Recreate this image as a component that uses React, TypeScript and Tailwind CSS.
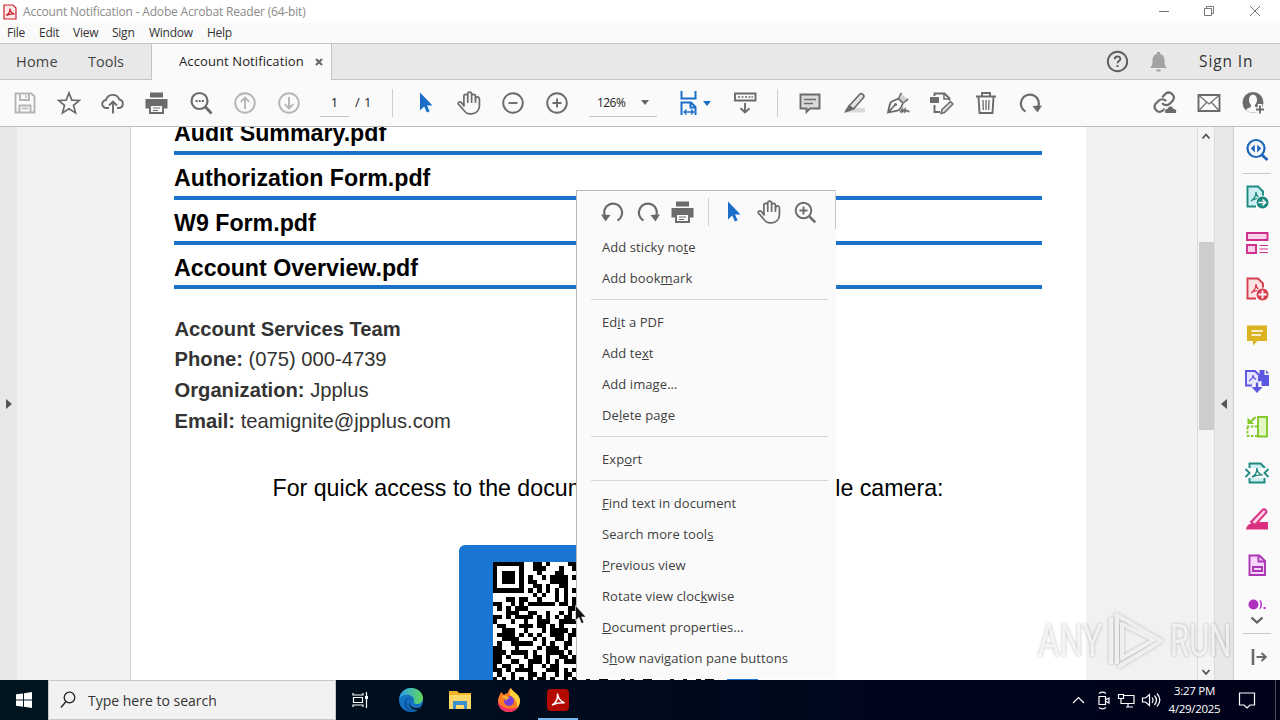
import type { ReactNode } from 'react'

type IcoProps = { children: ReactNode; className?: string }

const Ico = ({ children, className = 'text-[#6b6b6b]' }: IcoProps) => (
  <svg
    viewBox="0 0 24 24"
    className={`h-6 w-6 shrink-0 ${className}`}
    fill="none"
    stroke="currentColor"
    strokeWidth="1.9"
  >
    {children}
  </svg>
)

const Cell = ({ children }: { children: ReactNode }) => (
  <div className="flex w-11 shrink-0 items-center justify-center">{children}</div>
)

const SaveIcon = () => (
  <Ico className="text-[#b5b5b5]">
    <path d="M2.5 2.5h16l3 3v16h-19z" />
    <path d="M7 3v6h9V3M6.500 21v-6.500h11V21" />
    <path d="M13 4v3M9 17.500h6" strokeWidth="1.300" />
  </Ico>
)

const StarIcon = () => (
  <Ico>
    <path d="M12 1.900l2.800 7.200 7.700.4-6 4.900 2 7.500-6.500-4.200-6.500 4.200 2-7.500-6-4.900 7.700-.4z" strokeWidth="1.700" />
  </Ico>
)

const CloudIcon = () => (
  <Ico>
    <path d="M8 17H5.500a4 4 0 0 1-.5-8 7 7 0 0 1 13.300-.5A4.300 4.300 0 0 1 18 17h-2" />
    <path d="M12 22.500V11M8 14.500l4-4 4 4" />
  </Ico>
)

const PrintIcon = () => (
  <Ico>
    <path d="M5 1.500h13v5H5z" fill="currentColor" stroke="none" />
    <path d="M.5 8h22v9.500H19V13H4v4.500H.5z" fill="currentColor" stroke="none" />
    <path d="M5 14h13v8H5z" />
    <path d="M8 17h7M8 19.500h5" strokeWidth="1.200" />
  </Ico>
)

const FindIcon = () => (
  <Ico>
    <circle cx="10.500" cy="10" r="8" strokeWidth="2.200" />
    <path d="M16.500 16l6 6.500" strokeWidth="2.800" />
    <path d="M6.500 10h2M9.700 10h2M12.900 10h2" strokeWidth="2" />
  </Ico>
)

const UpIcon = () => (
  <Ico className="text-[#b5b5b5]">
    <circle cx="12" cy="12" r="9.800" />
    <path d="M12 18V7M7.800 10.800L12 6.600l4.200 4.200" />
  </Ico>
)

const DownIcon = () => (
  <Ico className="text-[#b5b5b5]">
    <circle cx="12" cy="12" r="9.800" />
    <path d="M12 6v11M7.800 13.200l4.200 4.200 4.200-4.200" />
  </Ico>
)

const ArrowIcon = () => (
  <Ico className="text-[#1b6ec8]">
    <path d="M7 1.500v18l4.200-4 2.700 6 2.800-1.300-2.700-5.700h5.500z" fill="currentColor" stroke="none" />
  </Ico>
)

const HandIcon = () => (
  <Ico>
    <g strokeWidth="1.600" strokeLinecap="round" transform="translate(-.8 -.6) scale(1.070)">
      <path d="M18 11V5.500a1.800 1.800 0 0 0-3.600 0M14.400 11V3.500a1.800 1.800 0 0 0-3.600 0V11M10.800 11V5.500a1.800 1.800 0 0 0-3.600 0v8.800" />
      <path d="M18 8a1.800 1.800 0 0 1 3.700 0v6.500c0 4-3 7.500-7.500 7.500h-1c-3.500 0-5-1.500-6.500-4l-4.500-5c-1-1.600 1-3 2.500-1.800l2.500 3.100" />
    </g>
  </Ico>
)

const MinusIcon = () => (
  <Ico>
    <circle cx="12" cy="12" r="9.800" />
    <path d="M7.500 12h9" />
  </Ico>
)

const PlusIcon = () => (
  <Ico>
    <circle cx="12" cy="12" r="9.800" />
    <path d="M7.500 12h9M12 7.500v9" />
  </Ico>
)

const FitIcon = () => (
  <Ico className="text-[#1b6ec8]">
    <path d="M4.500 0v7.500h14V0" strokeWidth="2" />
    <path d="M4.500 24V11.500h9.500l4.500 4.500v8M13.500 11.500v5h5" strokeWidth="2" />
    <path d="M7 21h9.500M9.500 18.500L7 21l2.500 2.500M14 18.500l2.500 2.500-2.500 2.500" strokeWidth="1.300" />
  </Ico>
)

const KeyboardIcon = () => (
  <Ico>
    <path d="M2 2.500h20.500v7H2z" />
    <path d="M5 6h2M8.500 6h2M12 6h2M15.500 6h2M18.500 6h1.500" strokeWidth="1.600" />
    <path d="M12 12v9M7.500 17.200l4.500 4.300 4.500-4.300" />
  </Ico>
)

const CommentIcon = () => (
  <Ico>
    <path d="M2.500 3.500h19v14H12L8.500 21v-3.500h-6z" fill="#d9d9d9" />
    <path d="M6 8.500h12M6 12.500h9" strokeWidth="1.300" />
  </Ico>
)

const HighlightIcon = () => (
  <Ico>
    <path d="M9 17h14v4.500H4z" fill="#d9d9d9" stroke="none" />
    <path d="M7 15L17.500 3.500c2-2 5.500.5 4 3L11.500 18z" fill="#e2e2e2" strokeWidth="1.700" />
    <path d="M7 14l5 4-4 2-6 2 2-4z" fill="currentColor" stroke="none" />
  </Ico>
)

const PenIcon = () => (
  <Ico>
    <path d="M2 21.500c1-4 1-7 3-10.500l7.500-3.500 4.500 4.500c-1 3-2 5-4 7-3 1.500-7 1.500-11 2.500zM2 21.500l6.500-7" strokeWidth="1.800" />
    <path d="M13 7l2.500-5M17.500 11.500L22 8" strokeWidth="1.900" />
    <path d="M15.500 3l5.500 5-3.500 3-4-4z" fill="#d0d0d0" stroke="none" />
    <circle cx="9.500" cy="13.500" r="1.600" fill="currentColor" stroke="none" />
    <path d="M14 21.500l2.500-3.500v3l2.500-3v3l2-1.500 2.500 1.500" strokeWidth="1.500" />
  </Ico>
)

const EditPageIcon = () => (
  <Ico>
    <path d="M0 6h9v6H0z" fill="currentColor" stroke="none" />
    <path d="M4.500 5V2.500h10l5 5v2M4.500 14v7H10" />
    <path d="M14 3v5h5" strokeWidth="1.500" />
    <path d="M12 18.500l8.500-8 2.500 2.500-8.500 8.500-3.500 1z" fill="#d9d9d9" strokeWidth="1.500" />
  </Ico>
)

const TrashIcon = () => (
  <Ico>
    <path d="M2 5.500h20M8 5V2h8v3M4.500 6l1 16h13l1-16" />
    <path d="M9 9l.3 10M12 9v10M15 9l-.3 10" strokeWidth="1.300" />
  </Ico>
)

const RotateRight = () => (
  <Ico>
    <path d="M7.500 20.500A9 9 0 1 1 20 16.500" strokeWidth="2.200" />
    <path d="M14.500 15l9.500-.5-4.500 7z" fill="currentColor" stroke="none" />
  </Ico>
)

const RotateLeft = () => (
  <Ico>
    <path d="M16.500 20.500A9 9 0 1 0 4 16.500" strokeWidth="2.200" />
    <path d="M9.500 15L0 14.500l4.500 7z" fill="currentColor" stroke="none" />
  </Ico>
)

const LinkIcon = () => (
  <Ico>
    <g strokeWidth="2.200" transform="translate(-.8 -.8)">
      <path d="M10 13a5 5 0 0 0 7.500.5l3-3a5 5 0 0 0-7-7l-3.500 3.500" />
      <path d="M14 11a5 5 0 0 0-7.500-.5l-3 3a5 5 0 0 0 7 7l2-2" />
    </g>
    <path d="M12.500 22.500c-2-2.500-.5-5 2-5 1-3.500 5-3.500 6 0 3 0 4 3 2.500 5z" fill="currentColor" stroke="#fafafa" strokeWidth="1" />
  </Ico>
)

const MailIcon = () => (
  <Ico>
    <path d="M1.500 4h21v16h-21z" />
    <path d="M2 4.500l10 8.500 10-8.500M2 19.500l7.500-8M22 19.500l-7.500-8" strokeWidth="1.100" />
  </Ico>
)

const PersonIcon = () => (
  <Ico>
    <circle cx="12" cy="11.500" r="10.500" fill="currentColor" stroke="none" />
    <ellipse cx="12" cy="9" rx="4" ry="5.500" fill="#fafafa" stroke="none" />
    <path d="M10 13h4v2.500c1 1.500 4 1.500 5 3.500-3.500 3.500-10.500 3.500-14 0 1-2 4-2 5-3.500z" fill="#fafafa" stroke="none" />
    <path d="M19 13v11M13.500 18.500h11" stroke="#fafafa" strokeWidth="4.500" />
    <path d="M19 14.500v8M15 18.500h8" />
  </Ico>
)

const ZoomPlus = () => (
  <Ico>
    <circle cx="10.500" cy="10.500" r="7.800" />
    <path d="M6.500 10.500h8M10.500 6.500v8" />
    <path d="M16.300 16.300l6 6" strokeWidth="2.600" />
  </Ico>
)

const Acrobat = () => (
  <path d="M6 16c3-2 5-6 5-9M11 7c0 4 3 6 6 6.500M6 15.500c3-1.500 7-2.500 10.500-2" strokeWidth="1.300" />
)

const sideTools = [
  <Ico className="text-[#1c8a80]">
    <path d="M11 21.500H2.500v-20H13l5 5V12" fill="#cdeef0" />
    <Acrobat />
    <circle cx="17.500" cy="17.500" r="6.500" fill="currentColor" stroke="#fafafa" strokeWidth="1" />
    <path d="M13.500 17.500h7M17.500 14.500l3 3-3 3" stroke="#fff" strokeWidth="1.600" />
  </Ico>,
  <Ico className="text-[#cf2f8c]">
    <path d="M2 2h20.500v7H2zM2 14h9v8H2z" fill="#fbd0ea" />
    <path d="M14.500 14.500H23M14.500 18H23M14.500 21.500H23" strokeWidth="1.200" />
  </Ico>,
  <Ico className="text-[#d63f50]">
    <path d="M11 21.500H2.500v-20H13l5 5V12" fill="#fde3e3" />
    <Acrobat />
    <circle cx="17.500" cy="17.500" r="6.500" fill="currentColor" stroke="#fafafa" strokeWidth="1" />
    <path d="M13.500 17.500h8M17.500 13.500v8" stroke="#fff" strokeWidth="1.800" />
  </Ico>,
  <Ico className="text-[#dbb320]">
    <path d="M2 2.500h20V18H12.500L8 22.500V18H2z" fill="currentColor" stroke="none" />
    <path d="M6.500 8H18M6.500 12H16" stroke="#fff" strokeWidth="1.600" />
  </Ico>,
  <Ico className="text-[#5c57e0]">
    <path d="M7 16.500H1V2h9l4 4v7" fill="#e6e4ff" />
    <path d="M14.500 1h5v5h4.500v11h-7.500v-5h-2z" fill="currentColor" stroke="none" />
    <path d="M21 1l3 3.500h-3z" fill="currentColor" stroke="none" />
    <path d="M4 12c3-2 4-4 4-6 0 3 2 4 3 4.500" strokeWidth="1.200" />
    <path d="M12 12.500v9" stroke="#fafafa" strokeWidth="5.500" />
    <path d="M12 13.500v8" strokeWidth="2.500" />
    <path d="M6.500 18h11L12 24z" fill="currentColor" stroke="none" />
  </Ico>,
  <Ico className="text-[#84c92b]">
    <path d="M13 2h9v19.500h-9z" fill="#e3f7c4" />
    <path d="M2 11.500h10M2 21h10M2.500 12v9" strokeDasharray="2.500 1.500" />
    <path d="M2.500 2.500V9H9z" fill="currentColor" stroke="none" />
    <path d="M10.500 2L5 7.500" strokeWidth="2.200" />
  </Ico>,
  <Ico className="text-[#1c8a80]">
    <path d="M4.500 7V2.500h11l4 4V7M4.500 17v4.500h15V17" fill="#cdeef0" />
    <path d="M.5 8l4 4-4 4M23.500 8l-4 4 4 4" />
    <path d="M7 16c4-2 5-5 5-9 0 4 2 6 5.500 7-4-.5-7 .5-10.500 2z" strokeWidth="1.400" />
  </Ico>,
  <Ico className="text-[#d9307f]">
    <path d="M1 22.500c1-5 4-6 6-6l2.500 1.500c2-1 3-1.500 4-3h9.500v7.500z" fill="currentColor" stroke="none" />
    <path d="M6 15L17.500 3c2-2 5 1 3.500 3L10 18z" fill="#ffd3e8" />
  </Ico>,
  <Ico className="text-[#aa35b5]">
    <path d="M4.500 2.500h10l5.500 5.500v14h-15.500z" fill="#f6d5fa" />
    <path d="M13.500 3v5.500H19M8 14h9v4H8z" />
  </Ico>,
]

const menuGroups = [
  ['Add sticky no&te', 'Add book&mark'],
  ['Ed&it a PDF', 'Add te&xt', 'Add ima&ge...', 'De&lete page'],
  ['Exp&ort'],
  [
    '&Find text in document',
    'Search more tool&s',
    '&Previous view',
    'Rotate view cloc&kwise',
    '&Document properties...',
    'S&how navigation pane buttons',
  ],
]

const MenuLabel = ({ text }: { text: string }) => {
  const i = text.indexOf('&')
  return (
    <span>
      {text.slice(0, i)}
      <span className="underline decoration-1 underline-offset-1">{text[i + 1]}</span>
      {text.slice(i + 2)}
    </span>
  )
}

const ContextMenu = () => (
  <div className="absolute left-[576px] top-[190px] z-10 h-[489px] w-[260px] overflow-hidden border-l border-t border-[#b9b9b9] bg-[#fafafa] font-['Open_Sans',sans-serif] text-[13px] tracking-[0.08px] text-[#3f3f3f]">
    <div className="flex h-[40px] items-center">
      <div className="flex h-9 w-full items-center border-r border-[#c8c8c8] pl-6 pt-[2px]">
        <div className="flex gap-[11px]">
          <RotateLeft />
          <RotateRight />
          <PrintIcon />
        </div>
        <div className="ml-[13px] mr-3 h-7 w-px bg-[#d0d0d0]" />
        <div className="flex gap-3">
          <ArrowIcon />
          <HandIcon />
          <ZoomPlus />
        </div>
      </div>
    </div>
    {menuGroups.map((group, g) => (
      <div key={g}>
        {g > 0 && (
          <div className="flex h-[13px] items-center pl-[14px] pr-2">
            <div className="h-px w-full bg-[#d5d5d5]" />
          </div>
        )}
        {group.map((item) => (
          <div key={item} className="flex h-[31px] items-center whitespace-pre pl-[25px] pt-[2px]">
            <MenuLabel text={item} />
          </div>
        ))}
      </div>
    ))}
  </div>
)

const qr = [
  '#######..##.#....##',
  '#.....#..###...#..#',
  '#.###.#...#...##...',
  '#.###.#.#..#.####.#',
  '#.###.#.##...####..',
  '#.....#..##.#..##..',
  '#######.#.#.#.#.#.#',
  '.........#.#..#.#..',
  '...##.##..#...#.#.#',
  '##..#.#.######.##.#',
  '.#.#.###.........##',
  '...###..##..#..#.#.',
  '##.#.####.#.#.#.##.',
  '#...#..#..###..####',
  '.##...###.##.#.#...',
  '..###..#...#.####.#',
  '.####.#.#.#..###.##',
  '..####...#.#..##.#.',
  '.#..#####..#.#..##.',
  '##...#....#.###.#..',
  '###.####.#..####.#.',
  '##.#...#.##.#..##.#',
  '##..##..###.#.#.###',
  '#.##..#.#..#.##....',
  '##.#.####...###.#.#',
  '.#..#...##.#..#.##.',
  '#.#.#.#.#.##.#..#.#',
]

const files = ['Audit Summary.pdf', 'Authorization Form.pdf', 'W9 Form.pdf', 'Account Overview.pdf']

const contact = [
  ['Account Services Team', ''],
  ['Phone:', '(075) 000-4739'],
  ['Organization:', 'Jpplus'],
  ['Email:', 'teamignite@jpplus.com'],
]

const Page = () => (
  <div className="relative h-full w-[956px] shrink-0 overflow-hidden border-l border-[#d8d8d8] bg-white pl-[43px] font-['Liberation_Sans',sans-serif] text-black">
    <div className="-mt-[16.8px] w-[868px]">
      {files.map((f) => (
        <div
          key={f}
          className="flex h-[44.8px] items-end border-b-[4px] border-[#1b72c8] pb-[3.7px] text-[23.2px] font-bold leading-[27px]"
        >
          {f}
        </div>
      ))}
    </div>
    <div className="mt-[24.4px] pl-[0.5px] text-[20.2px] leading-[30.7px] text-[#333]">
      {contact.map(([label, value]) => (
        <div key={label}>
          <b>{label}</b> {value}
        </div>
      ))}
    </div>
    <div className="ml-[98.500px] mt-[37.4px] flex w-[671px] justify-between whitespace-pre text-[23.2px] leading-[28px]">
      <span>For quick access to the docum</span>
      <span>le camera:</span>
    </div>
    <div className="ml-[285px] mt-[42.9px] h-[300px] w-[299px] rounded-[6px] bg-[#1976d2] pl-[34px] pt-[17px]">
      <svg viewBox="0 0 53 53" className="h-[234px] w-[234px]" shapeRendering="crispEdges">
        <rect width="53" height="53" fill="#fff" />
        {qr.map((row, y) =>
          row.split('').map((c, x) => c === '#' && <rect key={`${x}-${y}`} x={x} y={y} width="1" height="1" fill="#000" />)
        )}
        {[21, 24, 25, 29, 31, 34, 35, 40, 43, 46, 48, 49].map((x) => (
          <rect key={x} x={x} y="26" width="1" height="1" />
        ))}
      </svg>
    </div>
  </div>
)

const TitleBar = () => (
  <>
    <div className="flex h-[23px] items-center bg-white pl-[3px] font-['Open_Sans',sans-serif] text-[12px] text-[#8a8a8a]">
      <svg viewBox="0 0 14 16" className="mr-[6px] h-4 w-[14px]" fill="#fde9e9" stroke="#c8232c" strokeWidth="1.2">
        <path d="M1 1h9l3 3v11H1z" />
        <path d="M3 11.500c3-1.500 4-4 4-7 0 3 2 5 4.500 5.500-3-.5-6 .3-8.500 1.500z" strokeWidth="1.300" />
      </svg>
      <span className="tracking-[-0.18px]">Account Notification - Adobe Acrobat Reader (64-bit)</span>
      <svg viewBox="0 0 110 14" className="ml-auto mr-[16px] h-[14px] w-[110px]" fill="none" stroke="#777">
        <path d="M5 6.500h10M50.500 3.500h7v7h-7zM52.500 3.500v-2h7v7h-2M96 1l10 10M106 1L96 11" />
      </svg>
    </div>
    <div className="flex h-5 items-center bg-[#fafafa] pl-[7px] font-['Open_Sans',sans-serif] text-[12px] tracking-[-0.25px] text-[#333]">
      <span className="w-8">File</span>
      <span className="w-[34px]">Edit</span>
      <span className="w-[39px]">View</span>
      <span className="w-[37px]">Sign</span>
      <span className="w-[58px]">Window</span>
      <span>Help</span>
    </div>
  </>
)

const TabBar = () => (
  <div className="flex h-[37px] items-center border-y border-[#c3c3c3] bg-[#e8e8e8] font-['Open_Sans',sans-serif] text-[14.5px] text-[#444]">
    <span className="w-[72px] pl-4 tracking-[0.2px]">Home</span>
    <span className="w-[79px] pl-4">Tools</span>
    <div className="flex h-9 w-[181px] items-center border-x border-[#c3c3c3] bg-[#fafafa] pl-[27px] text-[13px] tracking-[0.1px] text-[#222]">
      <span className="w-[136px] whitespace-nowrap pt-px">Account Notification</span>
      <svg viewBox="0 0 8 8" className="h-2 w-2" stroke="#666" strokeWidth="2">
        <path d="M1 1l6 6M7 1L1 7" />
      </svg>
    </div>
    <div className="ml-auto flex items-center">
      <Ico className="mr-[17px] text-[#5e5e5e]">
        <circle cx="12.500" cy="11.500" r="9.700" />
        <path d="M9.700 9.200c0-3.800 5.800-3.500 5.600-.3-.1 2-2.800 2.200-2.800 4.300M12.500 15v2" />
      </Ico>
      <Ico className="text-[#a3a3a3]">
        <path d="M4 18C6.500 15.500 6.500 13.500 6.500 10.500c0-4 2-6 4.500-6.700V2h3v1.800c2.500.7 4.500 2.700 4.500 6.700 0 3 0 5 2.500 7.500zM10 19.500h5c0 3-5 3-5 0z" fill="currentColor" stroke="none" />
      </Ico>
      <span className="ml-[29px] w-[81px] whitespace-nowrap text-[15.500px] tracking-[0.9px] text-[#333]">Sign In</span>
    </div>
  </div>
)

const Toolbar = () => (
  <div className="flex h-[47px] items-center border-b border-[#bdbdbd] bg-[#fafafa] pl-[3px] font-['Open_Sans',sans-serif] text-[13px] text-[#222]">
    <Cell><SaveIcon /></Cell>
    <Cell><StarIcon /></Cell>
    <Cell><CloudIcon /></Cell>
    <Cell><PrintIcon /></Cell>
    <Cell><FindIcon /></Cell>
    <Cell><UpIcon /></Cell>
    <Cell><DownIcon /></Cell>
    <div className="ml-[9px] flex h-[27px] w-[29px] items-center justify-center border-b border-[#c3c3c3]">1</div>
    <span className="ml-[6px] w-[37px] whitespace-pre tracking-[0.4px]">/ 1</span>
    <div className="mr-[10px] h-7 w-px bg-[#cfcfcf]" />
    <Cell><ArrowIcon /></Cell>
    <Cell><HandIcon /></Cell>
    <Cell><MinusIcon /></Cell>
    <Cell><PlusIcon /></Cell>
    <div className="ml-[10px] flex h-[27px] w-[68px] items-center justify-between border-b border-[#c3c3c3] pl-2 pr-2">
      <span className="text-[12px] tracking-[-0.55px]">126%</span>
      <svg viewBox="0 0 8 5" className="h-[5px] w-2" fill="#666">
        <path d="M0 0h8L4 5z" />
      </svg>
    </div>
    <div className="ml-5 flex items-center">
      <FitIcon />
      <svg viewBox="0 0 8 5" className="ml-[2px] h-[5px] w-2" fill="#1b6ec8">
        <path d="M0 0h8L4 5z" />
      </svg>
    </div>
    <div className="ml-3 flex"><Cell><KeyboardIcon /></Cell></div>
    <div className="ml-[10px] mr-[10px] h-7 w-px bg-[#cfcfcf]" />
    <Cell><CommentIcon /></Cell>
    <Cell><HighlightIcon /></Cell>
    <Cell><PenIcon /></Cell>
    <Cell><EditPageIcon /></Cell>
    <Cell><TrashIcon /></Cell>
    <Cell><RotateRight /></Cell>
    <div className="ml-auto flex pr-[5px]">
      <Cell><LinkIcon /></Cell>
      <Cell><MailIcon /></Cell>
      <Cell><PersonIcon /></Cell>
    </div>
  </div>
)

const ScrollBar = () => (
  <div className="flex w-[18px] shrink-0 flex-col items-center border-x border-[#dcdcdc] bg-[#f4f4f4]">
    <svg viewBox="0 0 10 18" className="h-[18px] w-[10px]" fill="none" stroke="#505050" strokeWidth="1.800">
      <path d="M1.500 11.500L5 7.500l3.500 4" />
    </svg>
    <div className="mt-[97px] h-[188px] w-[15px] bg-[#cdcdcd]" />
    <svg viewBox="0 0 10 18" className="mt-auto h-[18px] w-[10px]" fill="none" stroke="#505050" strokeWidth="1.800">
      <path d="M1.500 8L5 12l3.500-4" />
    </svg>
  </div>
)

const SidePanel = () => (
  <div className="flex w-[47px] shrink-0 flex-col items-center border-l border-[#cfcfcf] bg-[#fafafa]">
    <div className="flex h-[46px] items-center">
      <Ico className="text-[#1b66b8]">
        <circle cx="11" cy="10.500" r="8.500" strokeWidth="2.200" />
        <path d="M17 17l5.500 5" strokeWidth="2.800" />
        <path d="M9.800 6.500v8l-4-4zM12.200 6.500v8l4-4z" fill="currentColor" stroke="none" />
      </Ico>
    </div>
    <div className="h-px w-7 bg-[#c8c8c8]" />
    {sideTools.map((tool, i) => (
      <div key={i} className="flex h-[46px] items-center">{tool}</div>
    ))}
    <svg viewBox="0 0 20 12" className="mt-[10px] h-3 w-5 shrink-0" fill="#b030c0">
      <circle cx="6.500" cy="6.500" r="5" />
      <path d="M12 1.500c4 1 4 9 0 10 2-3 2-7 0-10zM16.500 9h2v2h-2z" />
    </svg>
    <svg viewBox="0 0 14 8" className="mt-[6px] h-2 w-[14px] shrink-0" fill="none" stroke="#5e5e5e" strokeWidth="2.200">
      <path d="M1.500 1.500L7 6.500l5.500-5" />
    </svg>
    <div className="mt-[9px] h-px w-7 shrink-0 bg-[#c8c8c8]" />
    <div className="mt-[11px] pl-1">
      <Ico>
        <path d="M6 4v16" strokeWidth="2.600" />
        <path d="M9.500 12h9.500M14.500 8l4.300 4-4.300 4" strokeWidth="2" />
      </Ico>
    </div>
  </div>
)

const Watermark = () => (
  <div className="absolute left-[1038px] top-[609px] flex items-center font-[Roboto,sans-serif] text-[45px] leading-[64px] text-white/75 [filter:drop-shadow(0_0_1.5px_rgba(0,0,0,0.35))]">
    <span className="w-[66px] origin-left scale-x-[0.73]">ANY</span>
    <svg viewBox="0 0 66 64" className="h-16 w-[66px]" fill="none" stroke="#fff" strokeOpacity="0.75" strokeWidth="4">
      <path d="M13 5v50M7 9v46M11 5l46 27-43 26M18 15v34l32-18z" strokeLinejoin="round" />
    </svg>
    <span className="w-[66px] origin-left scale-x-[0.69]">RUN</span>
  </div>
)

const Cursor = () => (
  <svg viewBox="0 0 14 20" className="absolute left-[575px] top-[605px] z-20 h-5 w-[14px]" fill="#111" stroke="#fff" strokeWidth="0.600">
    <path d="M.5.5v15l3.500-3 2.500 6 2.500-1-2.500-5.500h4.500z" />
  </svg>
)

const TaskApp = ({ children, active = false }: { children: ReactNode; active?: boolean }) => (
  <div className="flex h-10 w-[49px] flex-col items-center">
    <div className="flex flex-1 items-center pt-[2px]">{children}</div>
    <div className={`h-[2px] w-10 ${active ? 'bg-[#76b9ed]' : ''}`} />
  </div>
)

const Taskbar = () => (
  <div className="flex h-10 items-center bg-linear-to-r from-[#001520] to-[#00021a] font-['Open_Sans',sans-serif] text-white">
    <div className="flex w-12 justify-center">
      <svg viewBox="0 0 16 16" className="h-4 w-4" fill="#fff">
        <path d="M0 2.300l7-.9v6.200H0zM8 1.200L16 0v7.600H8zM0 8.500h7v6.200l-7-.9zM8 8.500h8V16l-8-1.200z" />
      </svg>
    </div>
    <div className="flex h-10 w-72 items-center border border-[#c8c8c8] bg-[#f2f2f2] pl-[11px] text-[#333]">
      <svg viewBox="0 0 16 18" className="mr-3 h-[18px] w-4" fill="none" stroke="#222" strokeWidth="1.300">
        <circle cx="9.500" cy="6.500" r="5.300" />
        <path d="M6 10.500L1 16.500" />
      </svg>
      <span className="pt-px text-[14px]">Type here to search</span>
    </div>
    <div className="flex pl-px">
      <TaskApp>
        <svg viewBox="0 0 18 16" className="mr-px h-4 w-[18px]" fill="none" stroke="#fff" strokeWidth="1.200">
          <path d="M1 1v2h10V1M1.500 5.500h9v5h-9zM1 15v-2h10v2M14.500 0v16" />
          <path d="M13 4h3v3h-3z" fill="#fff" stroke="none" />
        </svg>
      </TaskApp>
      <TaskApp>
        <svg viewBox="0 0 24 24" className="h-6 w-6">
          <defs>
            <linearGradient id="edgeTop" x1="0" x2="1">
              <stop offset="0" stopColor="#2a9fe8" />
              <stop offset="1" stopColor="#62d85c" />
            </linearGradient>
          </defs>
          <circle cx="12" cy="12" r="12" fill="#1472c4" />
          <path d="M.3 10C2 3 7 0 12 0c8 0 12 6 12 10 0 4-3 6-6 6-3 0-4-1-3-3 1-6-9-9-14.700-3z" fill="url(#edgeTop)" />
          <path d="M8 13c-1 6 4 10 9 10-7 3-14-3-12-9 1-3 4-5 7-4-2 0-4 1-4 3z" fill="#0c59a4" />
          <path d="M12 10c-4 4-1 10 5 10 2 0 4-.5 5-1.500l-3 3.500c-7 1-12-6-7-12z" fill="#00151f" />
        </svg>
      </TaskApp>
      <TaskApp>
        <svg viewBox="0 0 22 20" className="h-5 w-[22px]">
          <path d="M0 1h8l2 2h12v16H0z" fill="#f0b429" />
          <path d="M0 5h22v14H0z" fill="#ffd869" />
          <path d="M4 11h14v8h-3v-4H7v4H4z" fill="#3a8fd0" />
        </svg>
      </TaskApp>
      <TaskApp>
        <svg viewBox="0 0 24 24" className="h-6 w-6">
          <path d="M12 24C5 24 1 19 1 13c0-4 2-6 3-9l3 3c1-1 2-2 4-2 0-2 1-4 3-5 1 4 8 5 9 12 0 7-4 12-11 12z" fill="#ff7a22" />
          <path d="M14 0c1 4 8 5 9 12 0 3-1 6-3 8 1-8-4-10-7-13-1-3 0-5 1-7z" fill="#ffd23c" />
          <path d="M1 13c0 7 5 11 11 11 4 0 7-2 9-5-5 3-16 3-20-6z" fill="#f2306a" />
          <circle cx="12" cy="13" r="5" fill="#7840d8" />
          <path d="M5 8c4-1 6 0 8 2-2 0-3 1-4 3-1-3-3-3-4-5z" fill="#ffac2e" />
        </svg>
      </TaskApp>
      <TaskApp active>
        <svg viewBox="0 0 22 22" className="h-[22px] w-[22px]">
          <rect width="22" height="22" rx="4" fill="#b30b00" />
          <path d="M5 16c4-2 6-6 5.500-11.500C11 9 13 12 17.500 14c-5-1-9 .5-12.500 2z" fill="none" stroke="#fff" strokeWidth="1.500" />
        </svg>
      </TaskApp>
    </div>
    <div className="ml-auto flex items-center">
      <svg viewBox="0 0 90 20" className="h-5 w-[90px]" fill="none" stroke="#fff" strokeWidth="1.200">
        <path d="M1 13l5.500-5.500L12 13" />
        <path d="M27 6.500h6.500v8H27zM34 9.500l3-1.500v5l-3-1.500M27 3.500c2-1.500 5-1.500 7 0M27 17.500c2 1.500 5 1.500 7 0" />
        <path d="M51 5.500h11v8H49V9M54 17h7M56 14v3M46.500 4.500h5v4h-5zM49 9v3" />
        <path d="M70.500 8v4h3l4 3.500v-11l-4 3.500zM80 7.500c1.500 2 1.500 3.500 0 5.500M82.500 5.500c2.500 3 2.500 6.500 0 9.500M85 3.500c3.500 4 3.500 9 0 13" />
      </svg>
      <div className="-ml-px w-[67px] whitespace-nowrap text-center text-[11.500px] leading-[18px] tracking-[-0.3px]">
        <div>3:27 PM</div>
        <div>4/29/2025</div>
      </div>
      <svg viewBox="0 0 18 18" className="ml-[10px] h-[18px] w-[18px]" fill="none" stroke="#fff" strokeWidth="1.200">
        <path d="M1.500 2h15v12H12l-3 3-3-3H1.500z" />
      </svg>
      <div className="ml-[19px] mr-1 h-10 w-px bg-[#4a4a5a]" />
    </div>
  </div>
)

export default function App() {
  return (
    <div className="relative flex h-[720px] w-[1280px] flex-col overflow-hidden bg-white">
      <TitleBar />
      <TabBar />
      <Toolbar />
      <div className="flex min-h-0 flex-1">
        <div className="flex w-[17px] shrink-0 items-center bg-[#e8e8e8] pl-[6px]">
          <svg viewBox="0 0 6 10" className="h-[10px] w-[6px]" fill="#555">
            <path d="M0 0l6 5-6 5z" />
          </svg>
        </div>
        <div className="w-[113px] shrink-0 bg-[#f1f1f1]" />
        <Page />
        <div className="flex-1 bg-[#f1f1f1]" />
        <ScrollBar />
        <div className="flex w-[18px] shrink-0 items-center justify-center bg-[#e8e8e8]">
          <svg viewBox="0 0 6 10" className="h-[10px] w-[6px]" fill="#555">
            <path d="M6 0L0 5l6 5z" />
          </svg>
        </div>
        <SidePanel />
      </div>
      <Taskbar />
      <ContextMenu />
      <Watermark />
      <Cursor />
    </div>
  )
}
